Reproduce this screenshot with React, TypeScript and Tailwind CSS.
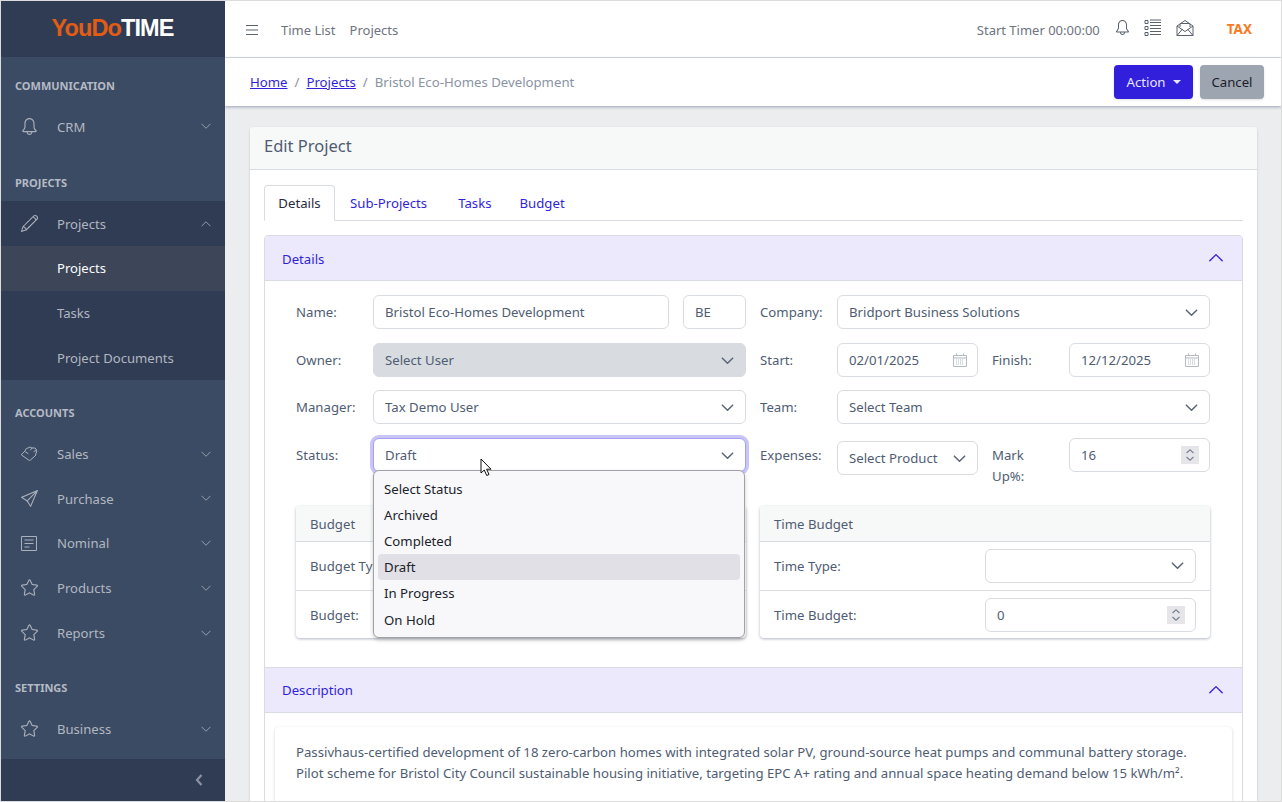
import React from "react";
import { SlBell, SlPencil, SlPaperPlane, SlStar } from "react-icons/sl";

const Chev = ({ up = false, className = "" }: { up?: boolean; className?: string }) => (
  <svg viewBox="0 0 16 16" className={className} fill="none" stroke="currentColor" strokeWidth="1.2" strokeLinecap="round" strokeLinejoin="round">
    <path d={up ? "M2.5 10.5 8 5l5.5 5.5" : "M2.5 5.5 8 11l5.5-5.5"} />
  </svg>
);

const Hand = () => (
  <svg viewBox="0 0 17 15" className="w-[17px] h-[15px]" fill="none" stroke="currentColor" strokeWidth="1" strokeLinejoin="round" strokeLinecap="round">
    <path d="M.5 8.500 4 5Q5 1.500 7 2 9 0 11 2q4-1 4.500 2 1 2-1 4l.5 1-6 5.500Z" />
    <path d="M4.500 6 7 7.500M11 2l-1.500 2M15 4.500l-2 1" />
  </svg>
);

const Note = () => (
  <svg viewBox="0 0 16 15" className="w-4 h-[15px]" fill="none" stroke="currentColor" strokeWidth="1">
    <path d="M.5.500h15v14H.500zM3.500 4h9M3.500 7.500h9M3.500 11h5" />
  </svg>
);

function SideItem({ icon, label, up = false, dark = false }: { icon: React.ReactNode; label: string; up?: boolean; dark?: boolean }) {
  return (
    <div className={`h-[44.8px] flex items-center pl-5 pr-[13px] ${dark ? "bg-[#303c54]" : ""}`}>
      <span className="w-9 flex items-center text-[#a9b0bc] text-[17px]">{icon}</span>
      <span className="flex-1 translate-y-px text-[13.1px] text-[#b1b7c1]">{label}</span>
      <Chev up={up} className="w-3 h-3 text-[#a0a7b3]" />
    </div>
  );
}

const SideHead = ({ children, cls }: { children: React.ReactNode; cls: string }) => (
  <div className={`pl-3.5 text-[11px] font-bold text-[#b4bac5] uppercase leading-4 ${cls}`}>{children}</div>
);

function Sidebar() {
  return (
    <aside className="w-[224px] shrink-0 bg-[#3c4b64] flex flex-col">
      <div className="h-[56px] bg-[#303c54] flex items-center justify-center shrink-0 pr-px">
        <span className="text-[23.5px] font-bold tracking-[-0.9px] text-[#e25c14] font-['Liberation_Sans',sans-serif]">
          YouDo<span className="text-white">TIME</span>
        </span>
      </div>
      <SideHead cls="pt-[21px] pb-[10px]">Communication</SideHead>
      <SideItem icon={<SlBell />} label="CRM" />
      <SideHead cls="pt-[26px] pb-[10.5px]">Projects</SideHead>
      <SideItem icon={<SlPencil />} label="Projects" up dark />
      <div className="bg-[#303c54]">
        <div className="h-[44.8px] flex items-center pl-14 text-[13.1px] text-white bg-[#3c4658]"><span>Projects</span></div>
        <div className="h-[44.8px] flex items-center pl-14 text-[13.1px] text-[#b1b7c1]"><span className="translate-y-px">Tasks</span></div>
        <div className="h-[44px] flex items-center pl-14 text-[13.1px] text-[#b1b7c1]"><span className="translate-y-px">Project Documents</span></div>
      </div>
      <SideHead cls="pt-[25.5px] pb-[10px]">Accounts</SideHead>
      <SideItem icon={<Hand />} label="Sales" />
      <SideItem icon={<SlPaperPlane />} label="Purchase" />
      <SideItem icon={<Note />} label="Nominal" />
      <SideItem icon={<SlStar />} label="Products" />
      <SideItem icon={<SlStar />} label="Reports" />
      <SideHead cls="pt-[25px] pb-[10px]">Settings</SideHead>
      <SideItem icon={<SlStar />} label="Business" />
      <div className="mt-auto h-[42px] bg-[#303c54] flex items-center justify-end pr-[22px]">
        <svg viewBox="0 0 8 12" className="w-2 h-3 text-[#8a93a2]" fill="none" stroke="currentColor" strokeWidth="2.2"><path d="M6.5 1 2 6l4.500 5" /></svg>
      </div>
    </aside>
  );
}

function TopBar() {
  return (
    <header className="h-[57px] shrink-0 bg-white border-b border-[#d8dbe0] flex items-center pl-5 pr-[29px] pt-px text-[13px] text-[#6e7480]">
      <svg viewBox="0 0 14 12" className="w-[14px] h-3 text-[#5c6370] mr-[22px]" fill="none" stroke="currentColor" strokeWidth="1"><path d="M1 1.500h12M1 6h12M1 10.500h12" /></svg>
      <span className="translate-y-px">Time List</span>
      <span className="ml-3.5 translate-y-px">Projects</span>
      <span className="ml-auto translate-y-px">Start Timer 00:00:00</span>
      <SlBell className="ml-[15px] text-[15px] text-[#5a606c] -translate-y-0.5" />
      <svg viewBox="0 0 18 18" className="ml-[14px] w-[18px] h-[18px] text-[#5a606c] -translate-y-0.5" fill="none" stroke="currentColor" strokeWidth="1">
        <path d="M1 1.500h3v3H1zM1 7.500h3v3H1zM1 13.500h3v3H1zM6 1h11M6 3.500h11M6 6.500h11M6 9.500h11M6 12.500h11M6 15.500h11" />
      </svg>
      <svg viewBox="0 0 18 18" className="ml-[14px] w-[18px] h-[18px] text-[#5a606c] -translate-y-0.5" fill="none" stroke="currentColor" strokeWidth="1" strokeLinejoin="round">
        <path d="M1 7 9 1.500 17 7v9.500H1ZM1 7l8 5.500L17 7M1 16.500 6.500 10M17 16.500 11.500 10M4 5v3M14 5v3M4 4.500h10" />
      </svg>
      <span className="ml-[33px] font-bold text-[13.5px] text-[#f9791e]">TAX</span>
    </header>
  );
}

function Crumbs() {
  return (
    <div className="h-[48px] shrink-0 bg-white flex items-center pl-[25px] pr-[17px] text-[13.2px] shadow-[0_1px_3px_rgba(60,70,100,0.45)] relative">
      <div className="flex items-center translate-y-px">
        <a className="text-[#321fdb] underline">Home</a>
        <span className="mx-[7px] text-[#8a93a2]">/</span>
        <a className="text-[#321fdb] underline">Projects</a>
        <span className="mx-[7px] text-[#8a93a2]">/</span>
        <span className="text-[#8a93a2]">Bristol Eco-Homes Development</span>
      </div>
      <button className="ml-auto h-[34px] w-[79px] rounded bg-[#321fdb] text-[#e8e6fb] flex items-center justify-center gap-[7px] shadow-sm">
        <span className="translate-y-px">Action</span>
        <span className="border-x-[4px] border-t-[4px] border-x-transparent border-t-[#e8e6fb]" />
      </button>
      <button className="ml-[7px] h-[34px] w-[64px] rounded bg-[#9da5b1] text-[#1c1c2c] shadow-sm"><span className="inline-block translate-y-px">Cancel</span></button>
    </div>
  );
}

const Label = ({ children, w = "w-[77px]" }: { children: React.ReactNode; w?: string }) => (
  <div className={`${w} shrink-0 text-[13.2px] text-[#4f5d73] leading-[21px]`}>{children}</div>
);

const boxCls = "h-[34px] flex items-center pl-[11px] pr-[10px] rounded-md border border-[#d8dbe0] bg-white text-[13.2px] text-[#4f5d73]";

const Value = ({ v }: { v: string }) => <span className="translate-y-px">{v}</span>;

const Input = ({ value, cls = "" }: { value: string; cls?: string }) => (
  <div className={`${boxCls} ${cls}`}><Value v={value} /></div>
);

const Select = ({ value, cls = "" }: { value: string; cls?: string }) => (
  <div className={`${boxCls} justify-between ${cls}`}>
    <Value v={value} />
    <Chev className="w-[15px] h-[15px] text-[#5c6577] stroke-[1.6]" />
  </div>
);

const Calendar = () => (
  <svg viewBox="0 0 14 14" className="w-[14px] h-[14px] text-[#b4b9c2]" fill="none" stroke="currentColor" strokeWidth="1">
    <path d="M.5 2.500h13v11H.500zM3.500.500v2M10.500.500v2M.500 5h13" />
    <path d="M3 7h8M3 9h8M3 11h8" strokeDasharray="1 1" />
  </svg>
);

const DateBox = ({ value }: { value: string }) => (
  <div className={`${boxCls} justify-between w-[141px]`}>
    <Value v={value} />
    <Calendar />
  </div>
);

const Spin = ({ value, cls = "" }: { value: string; cls?: string }) => (
  <div className={`${boxCls} justify-between ${cls}`}>
    <Value v={value} />
    <span className="w-[18px] h-[18px] bg-[#e6e6ea] flex items-center justify-center">
      <svg viewBox="0 0 10 14" className="w-[10px] h-[14px] text-[#7b8290]" fill="none" stroke="currentColor" strokeWidth="1.2"><path d="M1.500 5 5 1.800 8.500 5M1.500 9 5 12.200 8.500 9" /></svg>
    </span>
  </div>
);

function StatusMenu() {
  const items = ["Select Status", "Archived", "Completed", "Draft", "In Progress", "On Hold"];
  return (
    <div className="absolute left-0 top-[32px] w-[372px] z-20 h-[168px] rounded-md border border-[#a2a2a6] bg-[#f8f8fa] px-1 py-[4.5px] shadow-[0_2px_4px_rgba(0,0,0,0.2)]">
      {items.map((t) => (
        <div key={t} className={`h-[26.2px] flex items-center px-[6px] rounded-sm text-[13.2px] text-[#20232b] ${t === "Draft" ? "bg-[#e0e0e6]" : ""}`}><span className="translate-y-px">{t}</span></div>
      ))}
    </div>
  );
}

const BudgetCard = ({ title, rows }: { title: string; rows: [string, React.ReactNode][] }) => (
  <div className="rounded bg-white shadow-[0_1px_3px_rgba(60,70,100,0.4)]">
    <div className="h-[35.5px] flex items-center px-3.5 bg-[#f7f8f8] border-b border-[#d8dbe0] text-[13.2px] text-[#4f5d73] rounded-t"><span className="translate-y-0.5">{title}</span></div>
    {rows.map(([l, c], i) => (
      <div key={l} className={`flex items-center pl-3.5 pr-[14px] ${i ? "h-[48px] border-t border-[#d8dbe0]" : "h-[48.5px]"}`}>
        <div className="w-[211px] shrink-0 translate-y-px text-[13.2px] text-[#4f5d73]">{l}</div>
        <div className="flex-1 min-w-0">{c}</div>
      </div>
    ))}
  </div>
);

const AccHead = ({ title, shift }: { title: string; shift: string }) => (
  <div className="h-[45px] bg-[#ebe9fb] flex items-center justify-between pl-[17px] pr-[17px] text-[13.2px] text-[#321fdb] border-b border-[#d8dbe0]">
    <span className={shift}>{title}</span>
    <Chev up className="w-[18px] h-[18px]" />
  </div>
);

function Form() {
  return (
    <div className="pt-[14px] pl-[31px] pr-[32px] pb-[28.5px]">
      <div className="grid grid-cols-2 gap-x-[14px]">
        <div className="flex items-center h-[34px]"><Label>Name:</Label><Input value="Bristol Eco-Homes Development" cls="w-[296px]" /><Input value="BE" cls="ml-[14px] w-[63px]" /></div>
        <div className="flex items-center h-[34px]"><Label>Company:</Label><Select value="Bridport Business Solutions" cls="flex-1" /></div>
      </div>
      <div className="grid grid-cols-2 gap-x-[14px] mt-[14px]">
        <div className="flex items-center h-[34px]"><Label>Owner:</Label><Select value="Select User" cls="flex-1 !bg-[#d8dbe0] !border-[#d8dbe0]" /></div>
        <div className="flex items-center h-[34px]"><Label>Start:</Label><DateBox value="02/01/2025" /><Label w="w-[91px] pl-[14px]">Finish:</Label><DateBox value="12/12/2025" /></div>
      </div>
      <div className="grid grid-cols-2 gap-x-[14px] mt-[13px]">
        <div className="flex items-center h-[34px]"><Label>Manager:</Label><Select value="Tax Demo User" cls="flex-1" /></div>
        <div className="flex items-center h-[34px]"><Label>Team:</Label><Select value="Select Team" cls="flex-1" /></div>
      </div>
      <div className="grid grid-cols-2 gap-x-[14px] mt-[14px] h-[68px]">
        <div className="flex items-start">
          <div className="h-[34px] flex items-center"><Label>Status:</Label></div>
          <div className="relative flex-1">
            <Select value="Draft" cls="!border-[#a79ff0] shadow-[0_0_0_3px_#c9c5f6]" />
            <StatusMenu />
            <svg viewBox="0 0 12 19" className="absolute left-[107px] top-[20px] z-30 w-3 h-[19px]">
              <path d="M1 1v14l3.300-3 2.400 5.500 2.300-1-2.400-5.300H11Z" fill="#fff" stroke="#111" strokeWidth="1" strokeLinejoin="round" />
            </svg>
          </div>
        </div>
        <div className="flex items-start">
          <div className="h-[34px] flex items-center"><Label>Expenses:</Label></div>
          <Select value="Select Product" cls="w-[141px] mt-[3px]" />
          <Label w="w-[91px] pl-[14px] pt-[7px] pr-8">Mark Up%:</Label>
          <Spin value="16" cls="flex-1" />
        </div>
      </div>
      <div className="grid grid-cols-2 gap-x-[14px]">
        <BudgetCard title="Budget" rows={[["Budget Type:", <Select value="" />], ["Budget:", <Spin value="0" />]]} />
        <BudgetCard title="Time Budget" rows={[["Time Type:", <Select value="" />], ["Time Budget:", <Spin value="0" />]]} />
      </div>
    </div>
  );
}

export default function App() {
  return (
    <div className="w-[1282px] h-[802px] overflow-hidden border border-[#dcdcdc] flex font-['Noto_Sans',sans-serif] bg-[#ebedef]">
      <Sidebar />
      <main className="flex-1 min-w-0 flex flex-col overflow-hidden">
        <TopBar />
        <Crumbs />
        <div className="pl-[25px] pr-6 pt-[21px] flex-1 min-h-0">
          <div className="rounded bg-white shadow-[0_1px_2px_rgba(60,70,100,0.3)]">
            <div className="h-[43px] flex items-center px-3.5 pb-[3px] bg-[#f7f8f8] border-b border-[#d8dbe0] rounded-t text-[16.5px] text-[#4f5d73]">Edit Project</div>
            <div className="px-3.5 pt-[15px]">
              <div className="flex border-b border-[#d8dbe0] h-[36px] text-[13.2px]">
                <div className="h-[36px] w-[71px] flex items-center justify-center border border-[#d8dbe0] border-b-white rounded-t text-[#2a2a3c] bg-white"><span className="translate-y-px">Details</span></div>
                <div className="h-[36px] flex items-center pl-[15px] pr-[16px] text-[#321fdb]"><span className="translate-y-px">Sub-Projects</span></div>
                <div className="h-[36px] flex items-center pl-[15px] pr-[14px] text-[#321fdb]"><span className="translate-y-px">Tasks</span></div>
                <div className="h-[36px] flex items-center pl-[14px] text-[#321fdb]"><span className="translate-y-px">Budget</span></div>
              </div>
              <div className="mt-[14px] rounded border border-[#d8dbe0] overflow-hidden">
                <AccHead title="Details" shift="translate-y-0.5" />
                <Form />
                <div className="border-t border-[#d8dbe0]"><AccHead title="Description" shift="translate-y-px" /></div>
                <div className="px-2.5 pt-[14px]">
                  <div className="rounded shadow-[0_1px_3px_rgba(60,70,100,0.25)] px-[21px] pt-[15px] pb-8 text-[13.18px] leading-[21px] text-[#4f5d73]">
                    Passivhaus-certified development of 18 zero-carbon homes with integrated solar PV, ground-source heat pumps and communal battery storage.<br />
                    Pilot scheme for Bristol City Council sustainable housing initiative, targeting EPC A+ rating and annual space heating demand below 15 kWh/m².
                  </div>
                </div>
              </div>
            </div>
          </div>
        </div>
      </main>
    </div>
  );
}
